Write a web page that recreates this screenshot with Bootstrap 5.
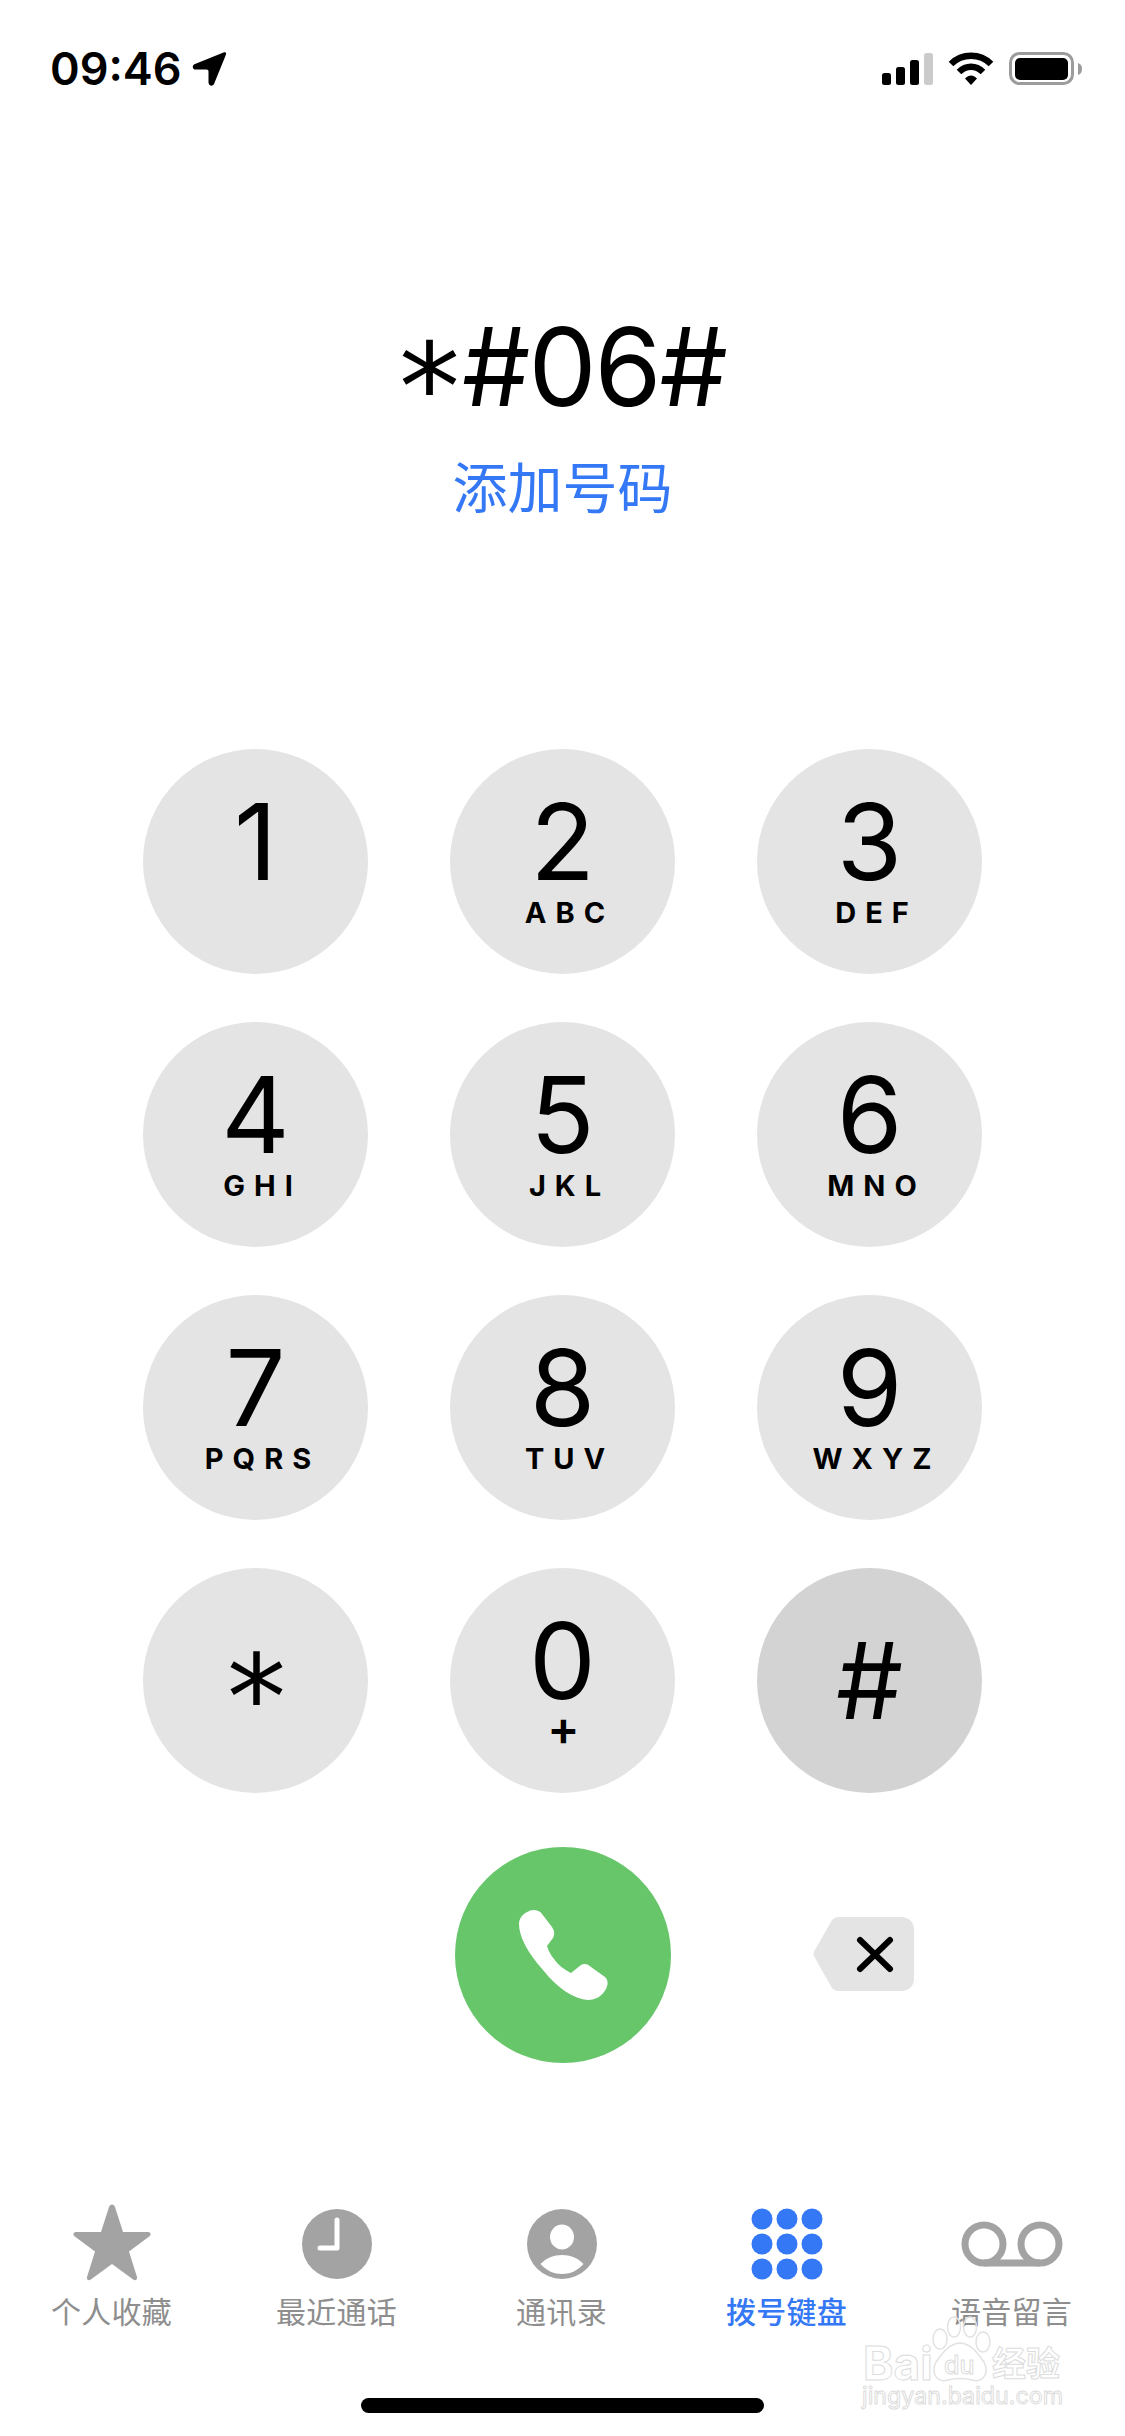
<!DOCTYPE html>
<html lang="zh-CN">
<head>
<meta charset="utf-8">
<title>拨号键盘</title>
<link href="https://cdn.jsdelivr.net/npm/bootstrap@5.3.0/dist/css/bootstrap.min.css" rel="stylesheet">
<style>
html,body{margin:0;background:#fff;}
body{font-family:Inter,"Noto Sans CJK SC",sans-serif;color:#000;}
.screen{width:1125px;height:2436px;overflow:hidden;position:relative;background:#fff;}
.status-strip{height:138px;padding:50px 40px 0 50px;}
.clock-text{font-size:45px;font-weight:600;line-height:38px;letter-spacing:0;}
.loc-arrow{width:36px;height:36px;margin-left:10px;}
.dial-area{height:611px;padding-top:170px;}
.dial-number{font-size:108px;font-weight:400;line-height:118px;height:118px;letter-spacing:-2px;}
.star-glyph{font-family:"DejaVu Sans",sans-serif;font-weight:400;font-size:122px;line-height:0;vertical-align:-.2em;letter-spacing:2px;}
.add-number{font-family:"Noto Sans CJK SC",sans-serif;font-size:55px;line-height:66px;font-weight:400;color:#3478f6;margin-top:25px;}
.pad-grid{display:grid;grid-template-columns:repeat(3,225px);column-gap:82px;row-gap:48px;width:839px;margin-left:143px;}
.pad-key{width:225px;height:225px;background:#e4e4e4;padding-top:43px;line-height:1;}
.pad-key.is-pressed{background:#d3d3d3;}
.pad-key.sym{padding-top:0;justify-content:center;}
.pad-digit{font-size:106px;font-weight:400;line-height:100px;height:100px;}
.pad-letters{font-size:29px;font-weight:700;line-height:32px;letter-spacing:9px;margin-right:-14px;margin-top:5px;}
.pad-plus{font-size:48px;font-weight:600;line-height:32px;margin-top:1px;margin-left:2px;}
.pad-sym{font-size:106px;line-height:1;font-weight:400;}
.pad-sym.star-sym{font-family:"DejaVu Sans",sans-serif;font-weight:400;font-size:118px;line-height:1;margin-top:34px;margin-left:2px;}
.call-row{margin-top:54px;height:216px;}
.call-btn{width:216px;height:216px;background:#66c669;}
.bksp-ico{margin-left:-11px;margin-top:-2px;}
.tab-row{margin-top:141px;}
.tab-cell{width:225px;}
.tab-ico{height:80px;width:120px;margin-left:-2px;}
.tab-label{font-family:"Noto Sans CJK SC",sans-serif;font-size:30px;line-height:40px;color:#8e8e8e;margin-top:6px;letter-spacing:.3px;margin-left:-2px;}
.tab-label.on{color:#3478f6;font-weight:500;}
.home-bar{width:403px;height:15px;background:#000;margin:68px auto 0;}
.wm{position:absolute;left:860px;top:2312px;width:210px;height:100px;}
</style>
</head>
<body>
<div class="screen d-flex flex-column">
  <div class="status-strip d-flex justify-content-between align-items-start">
    <div class="d-flex align-items-center">
      <span class="clock-text">09:46</span>
      <svg class="loc-arrow" viewBox="0 0 36 36"><path d="M31.500 1.500 3 13C-.5 14.500.5 18.500 3.500 18.500H14.500C15.800 18.500 16.500 19.200 16.500 20.500V31.500C16.500 35 20.800 35.800 22 33L33.800 4C34.800 1.800 33.500.5 31.500 1.500Z" fill="#000"/></svg>
    </div>
    <svg width="205" height="38" viewBox="0 0 205 38">
      <rect x="2" y="23" width="9" height="12" rx="2.500" fill="#000"/>
      <rect x="16" y="17" width="9" height="18" rx="2.500" fill="#000"/>
      <rect x="30" y="10" width="9" height="25" rx="2.500" fill="#000"/>
      <rect x="44" y="3" width="9" height="32" rx="2.500" fill="#cbcbcb"/>
      <path d="M71 14C82 3 100 3 111 14" fill="none" stroke="#000" stroke-width="6.500"/>
      <path d="M79 22C86 15 96 15 103 22" fill="none" stroke="#000" stroke-width="6.500"/>
      <path d="M85 28.500c4-4 8-4 12 0l-6 6.500Z" fill="#000"/>
      <rect x="130.500" y="3.500" width="62" height="30" rx="9" fill="none" stroke="#9c9c9c" stroke-width="3"/>
      <rect x="135" y="8" width="53" height="22" rx="5" fill="#000"/>
      <path d="M198 13c3 1 4 3 4 6s-1 5-4 6Z" fill="#9c9c9c"/>
    </svg>
  </div>

  <div class="dial-area text-center">
    <div class="dial-number"><span class="star-glyph">*</span>#06#</div>
    <div class="add-number">添加号码</div>
  </div>

  <div class="pad-grid">
    <div class="pad-key rounded-circle d-flex flex-column align-items-center"><div class="pad-digit">1</div></div>
    <div class="pad-key rounded-circle d-flex flex-column align-items-center"><div class="pad-digit">2</div><div class="pad-letters">ABC</div></div>
    <div class="pad-key rounded-circle d-flex flex-column align-items-center"><div class="pad-digit">3</div><div class="pad-letters">DEF</div></div>
    <div class="pad-key rounded-circle d-flex flex-column align-items-center"><div class="pad-digit">4</div><div class="pad-letters">GHI</div></div>
    <div class="pad-key rounded-circle d-flex flex-column align-items-center"><div class="pad-digit">5</div><div class="pad-letters">JKL</div></div>
    <div class="pad-key rounded-circle d-flex flex-column align-items-center"><div class="pad-digit">6</div><div class="pad-letters">MNO</div></div>
    <div class="pad-key rounded-circle d-flex flex-column align-items-center"><div class="pad-digit">7</div><div class="pad-letters">PQRS</div></div>
    <div class="pad-key rounded-circle d-flex flex-column align-items-center"><div class="pad-digit">8</div><div class="pad-letters">TUV</div></div>
    <div class="pad-key rounded-circle d-flex flex-column align-items-center"><div class="pad-digit">9</div><div class="pad-letters">WXYZ</div></div>
    <div class="pad-key sym rounded-circle d-flex flex-column align-items-center"><div class="pad-sym star-sym">*</div></div>
    <div class="pad-key rounded-circle d-flex flex-column align-items-center"><div class="pad-digit">0</div><div class="pad-plus">+</div></div>
    <div class="pad-key sym is-pressed rounded-circle d-flex flex-column align-items-center"><div class="pad-sym">#</div></div>
  </div>

  <div class="call-row pad-grid align-items-center">
    <div></div>
    <div class="d-flex justify-content-center">
      <div class="call-btn rounded-circle d-flex align-items-center justify-content-center">
        <svg width="90" height="90" viewBox="0 0 90 90"><path d="M15.600 0C19 0 22 1 24 4L34 17C36.500 21 37 24 35 28L29 36C31 42 33 45 36 49C41 56 47 60 53 63L63 55C66 53 70 54 73 57L87 67C90 70 90.500 74 88 79C84 86 78 90 70 90C56 89 40 79 25 60C10 43 1 27 1 14C1 7 7 1 15.600 0Z" fill="#fff"/></svg>
      </div>
    </div>
    <div class="d-flex justify-content-center">
      <svg class="bksp-ico" width="102" height="74" viewBox="0 0 102 74"><path d="M26 0H88C96 0 101 5 101 12V62C101 69 96 74 88 74H26C23 74 21 73 19 71L2 41C0 38 0 36 2 33L19 3C21 1 23 0 26 0Z" fill="#e4e4e4"/><path d="M47 23 77 52M77 23 47 52" stroke="#000" stroke-width="6" stroke-linecap="round"/></svg>
    </div>
  </div>

  <div class="tab-row d-flex">
    <div class="tab-cell d-flex flex-column align-items-center">
      <svg class="tab-ico" viewBox="0 0 120 80"><path d="M60 .5c1.500 0 2.500 1 3 2.500L71 28H96c2.500 0 3.500 2.800 1.500 4.300L77 47.500l8 25.500c.7 2.500-1.500 4-3.500 2.700L60 60 38.500 75.700c-2 1.300-4.200-.2-3.500-2.700l8-25.500L22.500 32.300C20.500 30.800 21.500 28 24 28H49L57 3c.5-1.500 1.500-2.500 3-2.500Z" fill="#a3a3a3"/></svg>
      <div class="tab-label">个人收藏</div>
    </div>
    <div class="tab-cell d-flex flex-column align-items-center">
      <svg class="tab-ico" viewBox="0 0 120 80"><circle cx="60" cy="40" r="35" fill="#a3a3a3"/><path d="M60 16V44H43" fill="none" stroke="#fff" stroke-width="5" stroke-linecap="round" stroke-linejoin="round"/></svg>
      <div class="tab-label">最近通话</div>
    </div>
    <div class="tab-cell d-flex flex-column align-items-center">
      <svg class="tab-ico" viewBox="0 0 120 80"><circle cx="60" cy="40" r="35" fill="#a3a3a3"/><ellipse cx="60" cy="33" rx="12" ry="12.500" fill="#fff"/><path d="M38.500 60C44 54 52 51 60 51C68 51 76 54 81.500 60C75 67 68 70 60 70C52 70 45 67 38.500 60Z" fill="#fff"/></svg>
      <div class="tab-label">通讯录</div>
    </div>
    <div class="tab-cell d-flex flex-column align-items-center">
      <svg class="tab-ico" viewBox="0 0 120 80" fill="#3478f6">
        <circle cx="35" cy="15" r="10.500"/><circle cx="60" cy="15" r="10.500"/><circle cx="85" cy="15" r="10.500"/>
        <circle cx="35" cy="40" r="10.500"/><circle cx="60" cy="40" r="10.500"/><circle cx="85" cy="40" r="10.500"/>
        <circle cx="35" cy="65" r="10.500"/><circle cx="60" cy="65" r="10.500"/><circle cx="85" cy="65" r="10.500"/>
      </svg>
      <div class="tab-label on">拨号键盘</div>
    </div>
    <div class="tab-cell d-flex flex-column align-items-center">
      <svg class="tab-ico" viewBox="0 0 120 80"><g fill="none" stroke="#a3a3a3" stroke-width="7"><circle cx="32" cy="40" r="19"/><circle cx="88" cy="40" r="19"/><path d="M32 59H88"/></g></svg>
      <div class="tab-label">语音留言</div>
    </div>
  </div>

  <div class="home-bar rounded-pill"></div>

  <svg class="wm" viewBox="0 0 210 100">
    <g fill="none" stroke="#e2e2e2" stroke-width="1.500">
      <ellipse cx="80" cy="27" rx="7" ry="10"/><ellipse cx="94" cy="15" rx="6.500" ry="10"/><ellipse cx="110" cy="15" rx="6.500" ry="10"/><ellipse cx="123" cy="30" rx="7" ry="10"/>
      <path d="M100 31C112 32 118 42 124 50C130 62 122 71 112 68C104 66 96 66 88 68C78 71 70 62 76 50C82 42 88 32 100 31Z"/>
    </g>
    <g fill="#fff" stroke="#dcdcdc" stroke-width="1" font-family="Inter,sans-serif">
      <text x="3" y="68" font-size="46" font-weight="700">Bai</text>
      <text x="84" y="62" font-size="25" font-weight="500">du</text>
      <text x="132" y="64" font-size="34" font-family="Noto Sans CJK SC,sans-serif" font-weight="700">经验</text>
      <text x="2" y="92" font-size="24" font-weight="400" textLength="201" lengthAdjust="spacingAndGlyphs">jingyan.baidu.com</text>
    </g>
  </svg>
</div>
<script src="https://cdn.jsdelivr.net/npm/bootstrap@5.3.0/dist/js/bootstrap.bundle.min.js"></script>
</body>
</html>
